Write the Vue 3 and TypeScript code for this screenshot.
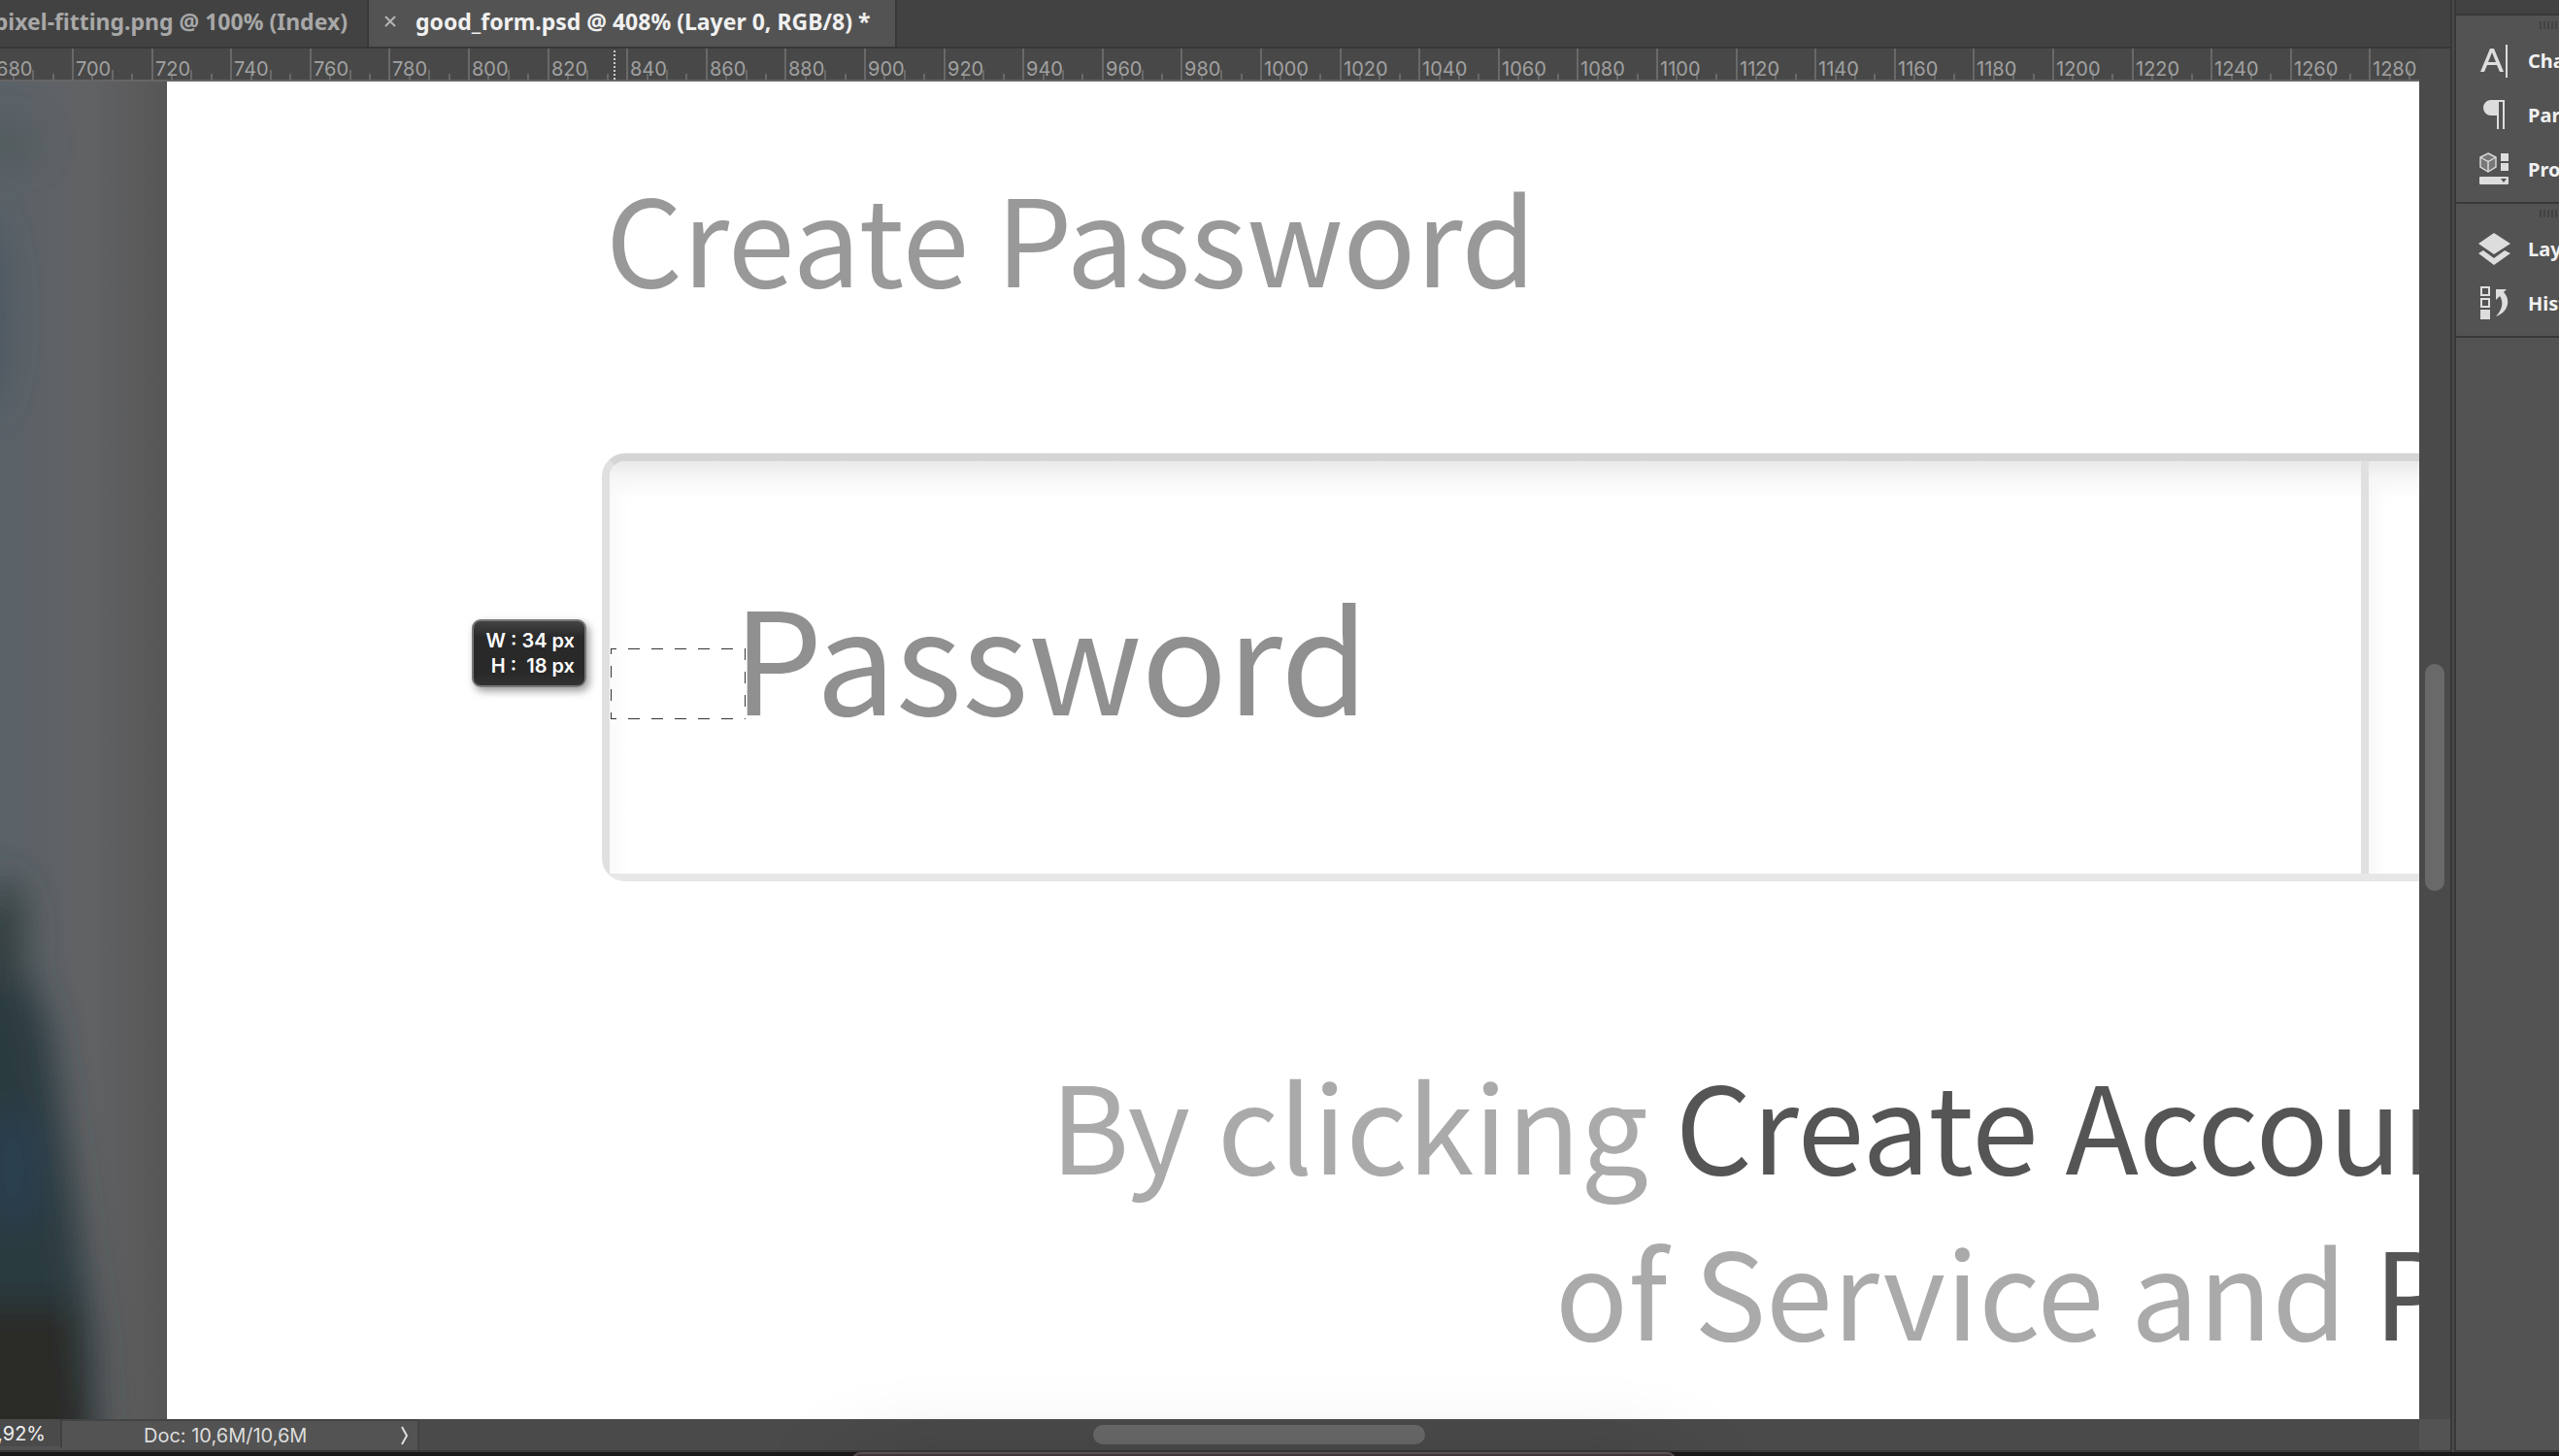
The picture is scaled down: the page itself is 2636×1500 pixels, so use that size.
<script setup lang="ts">
interface Panel { name: string; icon: string }
const groups: Panel[][] = [
  [
    { name: 'Character', icon: 'character' },
    { name: 'Paragraph', icon: 'paragraph' },
    { name: 'Properties', icon: 'properties' },
  ],
  [
    { name: 'Layers', icon: 'layers' },
    { name: 'History', icon: 'history' },
  ],
]
const ORIGIN = 74
const UNIT = 4.08
const marks = Array.from({ length: 31 }, (_, i) => 680 + i * 20)
const xOf = (value: number): number => Math.round(ORIGIN + (value - 700) * UNIT)
</script>

<template>
  <div class="app">
    <div class="workspace">
      <div class="document">
        <nav class="tabs" aria-label="Documents">
          <button class="tab first"><span>pixel-fitting.png @ 100% (Index)</span></button>
          <button class="tab active">
            <svg class="close" viewBox="0 0 12 12" aria-hidden="true"><path d="M1 1l10 10M11 1L1 11" /></svg>
            <span>good_form.psd @ 408% (Layer 0, RGB/8) *</span>
          </button>
        </nav>
        <svg class="ruler" aria-hidden="true">
          <g v-for="m in marks" :key="m">
            <rect :x="xOf(m)" y="0" width="2" height="32" />
            <rect :x="xOf(m + 5)" y="26" width="2" height="6" />
            <rect :x="xOf(m + 10)" y="22" width="2" height="10" />
            <rect :x="xOf(m + 15)" y="26" width="2" height="6" />
            <text :x="xOf(m) + 4" y="28">{{ m }}</text>
          </g>
          <line class="pointer" x1="633" y1="2" x2="633" y2="32" />
        </svg>
        <div class="view">
          <div class="backdrop">
            <svg viewBox="0 0 172 1378" preserveAspectRatio="none" aria-hidden="true">
              <defs>
                <linearGradient id="base" x1="0" x2="1" y1="0" y2="0">
                  <stop offset="0" stop-color="#5a6268" />
                  <stop offset=".55" stop-color="#616264" />
                  <stop offset="1" stop-color="#565656" />
                </linearGradient>
                <filter id="soft" x="-100%" y="-50%" width="300%" height="200%"><feGaussianBlur stdDeviation="18" /></filter>
              </defs>
              <rect width="172" height="1378" fill="url(#base)" />
              <g filter="url(#soft)">
                <path d="M-60 840L10 880L50 970L72 1120L98 1300L104 1460H-60Z" fill="#293a40" />
                <ellipse cx="5" cy="880" rx="22" ry="60" fill="#34413f" />
                <ellipse cx="14" cy="1120" rx="24" ry="60" fill="#2b4052" />
                <path d="M-60 1260H76L96 1460H-60Z" fill="#2b2a28" />
                <ellipse cx="-14" cy="240" rx="20" ry="100" fill="#4a5560" />
                <ellipse cx="-6" cy="65" rx="50" ry="18" fill="#515a5c" />
              </g>
            </svg>
          </div>
          <main class="page">
            <form class="form" @submit.prevent>
              <label class="caption" for="password">Create Password</label>
              <div class="field">
                <input id="password" type="text" placeholder="Password" />
                <div class="addon"></div>
                <div class="marquee"></div>
                <div class="readout">
                  <span>W : 34 px</span>
                  <span>H :&nbsp; 18 px</span>
                </div>
              </div>
            </form>
            <p class="terms">
              <span class="line one">By clicking <strong>Create Account</strong></span>
              <span class="line two">of Service and <strong>Privacy</strong></span>
            </p>
          </main>
          <div class="vscroll"><div class="thumb"></div></div>
        </div>
        <footer class="status">
          <label class="zoom"><input type="text" value="407,92%" aria-label="Zoom" /></label>
          <button class="doc"><span>Doc: 10,6M/10,6M</span>
            <svg viewBox="0 0 10 20" aria-hidden="true"><path d="M2 1l5 9l-5 9" /></svg>
          </button>
          <div class="hscroll"><div class="thumb"></div></div>
          <div class="corner"></div>
        </footer>
      </div>
      <aside class="panels">
        <div class="cap"></div>
        <section v-for="(group, i) in groups" :key="i" class="group">
          <div class="grip"></div>
          <button v-for="p in group" :key="p.name" class="panel">
            <svg v-if="p.icon === 'character'" viewBox="0 0 36 36" aria-hidden="true">
              <path d="M3 30L13 6h4l10 24h-4l-3-7H10l-3 7zM11 20h8l-4-10z" fill-rule="evenodd" />
              <path d="M29 2h2v34h-2z" />
            </svg>
            <svg v-else-if="p.icon === 'paragraph'" viewBox="0 0 36 36" aria-hidden="true">
              <path d="M14 3h14v30h-2V5h-4v28h-2V19h-6a8 8 0 0 1 0-16z" />
            </svg>
            <svg v-else-if="p.icon === 'properties'" viewBox="0 0 36 36" aria-hidden="true">
              <path d="M11 2l8 4v10l-8 5l-8-5V6z" fill="#777" stroke="#ddd" stroke-width="1.4" />
              <path d="M3 6l8 4.5l8-4.5M11 10.5V21" fill="none" stroke="#ddd" stroke-width="1.4" />
              <path d="M24 2h8v8h-8zM24 12h8v8h-8zM3 26h28a1 1 0 0 1 1 1v6a1 1 0 0 1-1 1H3a1 1 0 0 1-1-1v-6a1 1 0 0 1 1-1z" />
              <path d="M24 28h6l-3 4z" fill="#535353" />
            </svg>
            <svg v-else-if="p.icon === 'layers'" viewBox="0 0 36 36" aria-hidden="true">
              <path d="M17 2l17 11l-17 11L1 13zM6 20l11 8l11-8l6 3l-17 12L1 23z" />
            </svg>
            <svg v-else viewBox="0 0 36 36" aria-hidden="true">
              <path d="M4 2h8v8H4zM4 14h8v8H4z" fill="none" stroke="#ddd" stroke-width="2" />
              <path d="M3 25h10v10H3zM19 4h11l-3 3c7 7 6 20-8 25c7-7 8-15 4-21l-4 4z" />
            </svg>
            <span>{{ p.name }}</span>
          </button>
        </section>
      </aside>
    </div>
    <div class="desktop"><div class="dock"></div></div>
  </div>
</template>

<style>
html, body, #app { height: 100%; }
body { margin: 0; background: #1b181b; }
</style>

<style scoped>
.app { display: flex; flex-direction: column; height: 100vh; overflow: hidden; position: relative; font-family: "Noto Sans", sans-serif; color: #f0f0f0; }
.app * { box-sizing: border-box; }
button { appearance: none; border: 0; margin: 0; padding: 0; color: inherit; font: inherit; background: none; }
.workspace { flex: 1; min-height: 0; display: flex; background: #4a4a4a; }
.document { flex: 1; min-width: 0; display: flex; flex-direction: column; border-right: 2px solid #383838; background: #4a4a4a; }
.tabs { display: flex; height: 50px; flex: none; background: #424242; border-bottom: 2px solid #383838; font-size: 23px; font-weight: 700; }
.tab { display: flex; align-items: center; white-space: nowrap; padding-bottom: 4px; border-right: 2px solid #383838; }
.tab.first { width: 380px; justify-content: flex-end; padding-right: 20px; color: #a8a8a8; }
.tab.active { width: 544px; background: #535353; padding-left: 16px; gap: 20px; }
.close { width: 12px; height: 12px; fill: none; stroke: #b4b4b4; stroke-width: 2; }
.ruler { display: block; width: calc(100% - 32px); height: 34px; flex: none; background: #484848; border-bottom: 2px solid #666; fill: #696969; }
.ruler text { font: 20px "Inter", sans-serif; fill: #a0a0a0; }
.pointer { stroke: #ccc; stroke-width: 2; stroke-dasharray: 2 2; }
.view { flex: 1; min-height: 0; display: flex; }
.backdrop { width: 172px; flex: none; background: #5d6062; overflow: hidden; }
.backdrop svg { display: block; width: 100%; height: 100%; }
.page { flex: 1; min-width: 0; overflow: hidden; background: #fff; font-family: "Noto Sans CJK SC", "Noto Sans", sans-serif; color: #999; }
.form { padding: 72px 0 0 448px; }
.caption { display: block; padding-left: 4px; height: 311px; font-size: 124px; line-height: 172px; white-space: nowrap; }
.field { position: relative; display: flex; height: 441px; border: 8px solid #e0e0e0; border-top-color: #d5d5d5; border-bottom-color: #e7e7e7; border-right: 0; border-radius: 24px 0 0 24px; background: #fff; }
.field input { flex: 1; min-width: 0; height: 425px; border: 0; outline: 0; padding: 0 0 28px 127px; font-family: inherit; font-size: 146px; background: linear-gradient(#e9e9e9, #f6f6f6 16px, #fff0 40px), linear-gradient(90deg, #fafafa, #fff 20px); border-radius: 16px 0 0 0; }
.field input::placeholder { color: #909090; opacity: 1; }
.addon { width: 60px; border-left: 8px solid #e0e0e0; background: linear-gradient(#e9e9e9, #f6f6f6 16px, #fff0 40px), linear-gradient(90deg, #f9f9f9, #fff 20px); }
.marquee { position: absolute; left: 1px; top: 193px; width: 139px; height: 73px; background: repeating-linear-gradient(90deg, #333 0 12px, transparent 12px 24px) -6px 0 / 150px 1px no-repeat, repeating-linear-gradient(90deg, #333 0 12px, transparent 12px 24px) -6px 100% / 150px 1px no-repeat, repeating-linear-gradient(#333 0 12px, transparent 12px 24px) 0 -6px / 1px 90px no-repeat, repeating-linear-gradient(#333 0 12px, transparent 12px 24px) 100% 0 / 1px 100% no-repeat; }
.readout { position: absolute; left: -142px; top: 163px; width: 118px; height: 70px; padding: 7px 10px; display: flex; flex-direction: column; align-items: flex-end; border: 2px solid #777; border-radius: 9px; background: linear-gradient(#444, #292929 16px 54px, #333); box-shadow: 3px 4px 8px #0006; color: #fff; font: 600 20px/26px "Inter", sans-serif; white-space: nowrap; }
.terms { margin: 163px 0 0; color: #aaa; font-size: 124px; line-height: 171px; white-space: nowrap; }
.terms strong { color: #555; font-weight: 400; }
.line { display: block; }
.one { padding-left: 910px; }
.two { padding-left: 1430px; }
.vscroll { width: 32px; flex: none; background: #4a4a4a; padding: 600px 6px 0; }
.vscroll .thumb { height: 234px; border-radius: 10px; background: #696969; }
.status { display: flex; height: 34px; flex: none; background: #4a4a4a; border-bottom: 2px solid #383838; font: 20px "Inter", sans-serif; color: #ddd; }
.zoom { width: 64px; display: flex; justify-content: flex-end; padding: 2px 15px 0 0; overflow: hidden; border-bottom: 4px solid #535353; border-right: 2px solid #404040; }
.zoom input { width: 90px; flex: none; border: 0; padding: 0; background: none; color: #eee; font: inherit; text-align: right; }
.doc { width: 368px; display: flex; align-items: center; justify-content: space-between; padding: 0 8px 0 84px; background: #535353; border-top: 2px solid #444; border-right: 2px solid #444; }
.doc svg { width: 10px; height: 20px; fill: none; stroke: #ddd; stroke-width: 2; }
.hscroll { flex: 1; padding: 6px 0 0 694px; }
.hscroll .thumb { width: 342px; height: 20px; border-radius: 10px; background: #696969; }
.corner { width: 32px; background: #535353; }
.panels { width: 108px; flex: none; overflow: hidden; border-left: 2px solid #383838; border-bottom: 2px solid #383838; margin-left: 2px; background: #535353; }
.cap { height: 16px; background: #424242; border-bottom: 2px solid #383838; }
.group { padding-bottom: 6px; border-bottom: 2px solid #383838; }
.grip { margin: 0 0 4px 86px; height: 8px; background: repeating-linear-gradient(90deg, #424242 0 2px, transparent 2px 4px); }
.group { padding-top: 6px; }
.panel { display: flex; align-items: center; gap: 16px; height: 56px; padding-left: 22px; font-size: 20px; font-weight: 700; }
.panel svg { width: 36px; height: 36px; flex: none; fill: #ddd; }
.desktop { height: 4px; flex: none; background: #1b181b; }
.dock { width: 848px; height: 120px; margin-left: 878px; border: 2px solid #5a5055; border-radius: 8px 8px 0 0; background: #3d343a; box-shadow: 0 20px 100px #0003; position: relative; }
</style>
